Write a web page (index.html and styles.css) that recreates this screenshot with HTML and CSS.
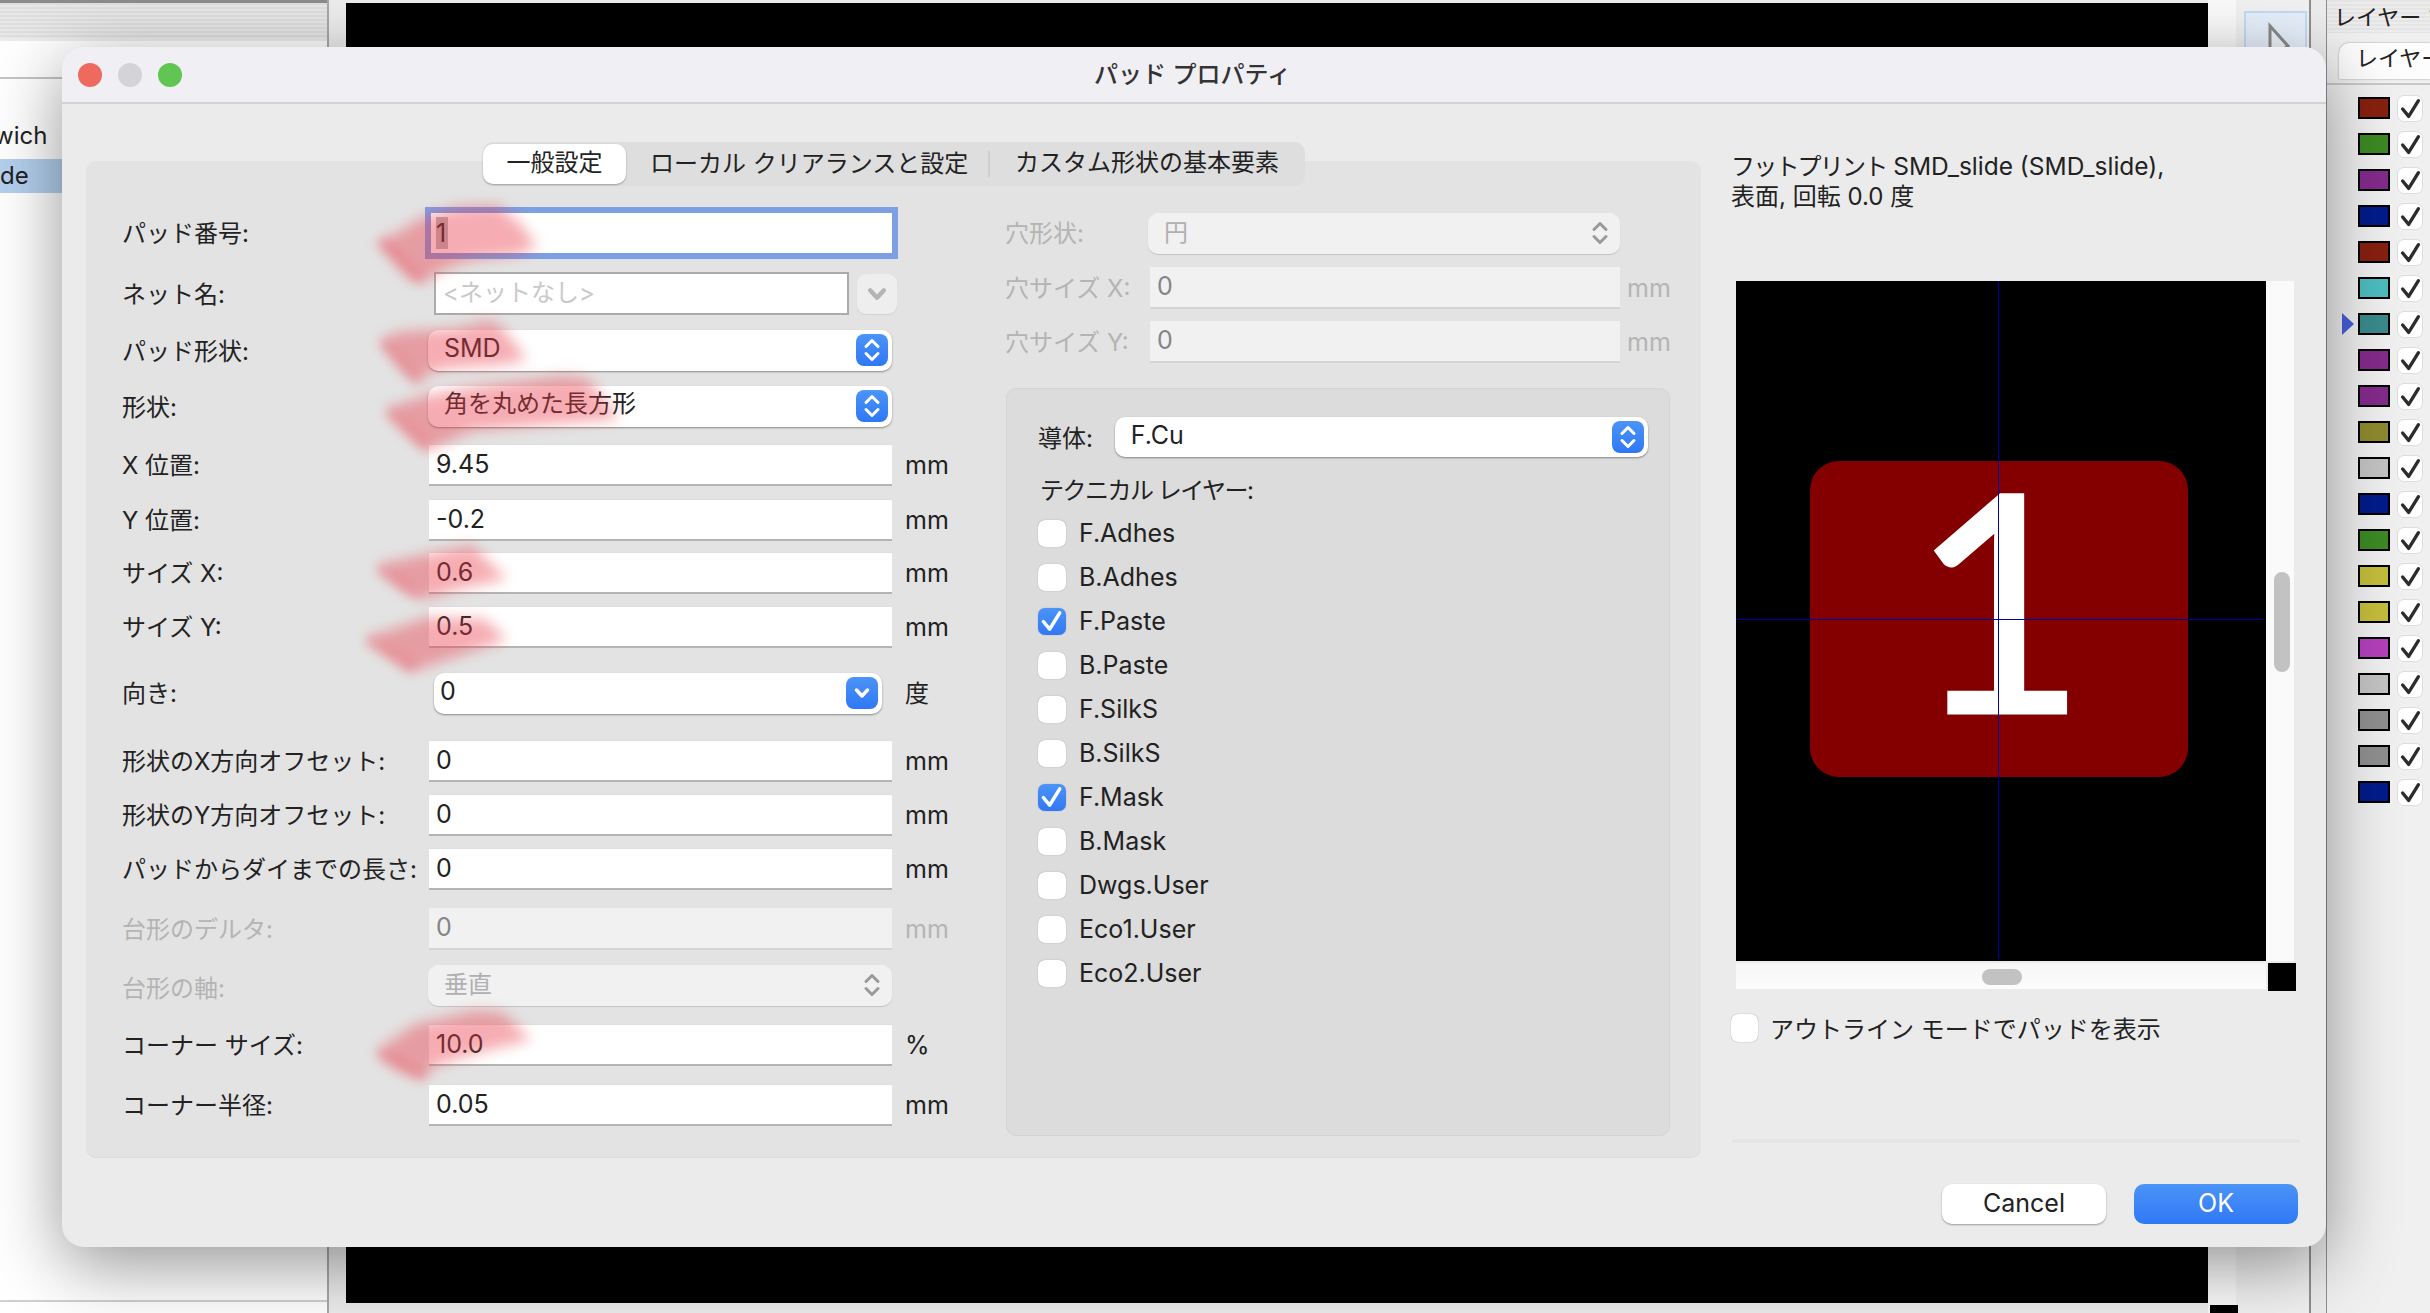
FILE: index.html
```html
<!DOCTYPE html>
<html lang="ja">

<head>
    <meta charset="UTF-8">
    <title>パッド プロパティ</title>
    <link rel="stylesheet" href="styles.css">
</head>

<body>
    <svg class="defs" width="0" height="0">
        <symbol id="stepper" viewBox="0 0 32 32">
            <path d="M10 12.500 16 6.500 22 12.500M10 19.500 16 25.500 22 19.500" fill="none" stroke="currentColor" stroke-width="3" stroke-linecap="round" stroke-linejoin="round"/>
        </symbol>
        <symbol id="down" viewBox="0 0 32 32">
            <path d="M10.500 13 16 19 21.500 13" fill="none" stroke="currentColor" stroke-width="3.500" stroke-linecap="round" stroke-linejoin="round"/>
        </symbol>
        <symbol id="tick" viewBox="0 0 28 28">
            <path d="M5 14 11.500 22 22 5" fill="none" stroke="currentColor" stroke-width="3.600" stroke-linecap="round" stroke-linejoin="round"/>
        </symbol>
    </svg>

    <div class="app">
        <div class="tree">
            <div class="strip"></div>
            <div class="tree-head"></div>
            <div class="tree-item first">wich</div>
            <div class="tree-item selected">de</div>
            <div class="tree-foot"></div>
        </div>
        <div class="gutter"></div>
        <div class="board"></div>
        <div class="board-scroll"><div class="board-corner"></div></div>
        <div class="tools">
            <div class="tool-btn">
                <svg width="40" height="50" viewBox="0 0 40 50"><path d="M18 13V46L36 33Z" fill="#eef3fa" stroke="#8a8a8a" stroke-width="3"/></svg>
            </div>
        </div>
        <div class="tools-edge"></div>
        <div class="layers">
            <div class="layers-title">レイヤー マネージャ</div>
            <div class="layers-tabs"><div class="layers-tab">レイヤー</div></div>
            <div class="layer-list">
                <div class="layer"><span class="swatch red"></span><span class="tick"><svg><use href="#tick"/></svg></span></div>
                <div class="layer"><span class="swatch green"></span><span class="tick"><svg><use href="#tick"/></svg></span></div>
                <div class="layer"><span class="swatch purple"></span><span class="tick"><svg><use href="#tick"/></svg></span></div>
                <div class="layer"><span class="swatch navy"></span><span class="tick"><svg><use href="#tick"/></svg></span></div>
                <div class="layer"><span class="swatch red"></span><span class="tick"><svg><use href="#tick"/></svg></span></div>
                <div class="layer"><span class="swatch cyan"></span><span class="tick"><svg><use href="#tick"/></svg></span></div>
                <div class="layer active"><span class="swatch teal"></span><span class="tick"><svg><use href="#tick"/></svg></span></div>
                <div class="layer"><span class="swatch purple"></span><span class="tick"><svg><use href="#tick"/></svg></span></div>
                <div class="layer"><span class="swatch purple"></span><span class="tick"><svg><use href="#tick"/></svg></span></div>
                <div class="layer"><span class="swatch olive"></span><span class="tick"><svg><use href="#tick"/></svg></span></div>
                <div class="layer"><span class="swatch silver"></span><span class="tick"><svg><use href="#tick"/></svg></span></div>
                <div class="layer"><span class="swatch navy"></span><span class="tick"><svg><use href="#tick"/></svg></span></div>
                <div class="layer"><span class="swatch green"></span><span class="tick"><svg><use href="#tick"/></svg></span></div>
                <div class="layer"><span class="swatch yellow"></span><span class="tick"><svg><use href="#tick"/></svg></span></div>
                <div class="layer"><span class="swatch yellow"></span><span class="tick"><svg><use href="#tick"/></svg></span></div>
                <div class="layer"><span class="swatch magenta"></span><span class="tick"><svg><use href="#tick"/></svg></span></div>
                <div class="layer"><span class="swatch silver"></span><span class="tick"><svg><use href="#tick"/></svg></span></div>
                <div class="layer"><span class="swatch gray"></span><span class="tick"><svg><use href="#tick"/></svg></span></div>
                <div class="layer"><span class="swatch gray"></span><span class="tick"><svg><use href="#tick"/></svg></span></div>
                <div class="layer"><span class="swatch navy"></span><span class="tick"><svg><use href="#tick"/></svg></span></div>
            </div>
        </div>
    </div>

    <div class="dialog">
        <div class="titlebar">
            <div class="lights">
                <span class="light close"></span>
                <span class="light idle"></span>
                <span class="light zoom"></span>
            </div>
            <div class="title">パッド プロパティ</div>
        </div>

        <div class="dialog-body">
            <div class="tabpanel">
                <div class="tabs">
                    <div class="tab on">一般設定</div>
                    <div class="tab second">ローカル クリアランスと設定</div>
                    <div class="tab third">カスタム形状の基本要素</div>
                </div>

                <div class="columns">
                    <div class="col-left">
                        <div class="row">
                            <label>パッド番号:</label>
                            <div class="field focus"><span class="selected-text">1</span></div>
                        </div>
                        <div class="row g18">
                            <label>ネット名:</label>
                            <div class="net">
                                <div class="net-input">&lt;ネットなし&gt;</div>
                                <div class="net-btn"><svg><use href="#down"/></svg></div>
                            </div>
                        </div>
                        <div class="row g15">
                            <label class="low">パッド形状:</label>
                            <div class="select latin">SMD<span class="step"><svg><use href="#stepper"/></svg></span></div>
                        </div>
                        <div class="row g14">
                            <label class="low">形状:</label>
                            <div class="select">角を丸めた長方形<span class="step"><svg><use href="#stepper"/></svg></span></div>
                        </div>
                        <div class="row g17">
                            <label>X 位置:</label>
                            <div class="field">9.45</div>
                            <span class="unit">mm</span>
                        </div>
                        <div class="row g13">
                            <label>Y 位置:</label>
                            <div class="field">-0.2</div>
                            <span class="unit">mm</span>
                        </div>
                        <div class="row g11">
                            <label>サイズ X:</label>
                            <div class="field">0.6</div>
                            <span class="unit">mm</span>
                        </div>
                        <div class="row g12">
                            <label>サイズ Y:</label>
                            <div class="field">0.5</div>
                            <span class="unit">mm</span>
                        </div>
                        <div class="row g24">
                            <label>向き:</label>
                            <div class="select angle latin">0<span class="step"><svg><use href="#down"/></svg></span></div>
                            <span class="unit cjk">度</span>
                        </div>
                        <div class="row g26">
                            <label>形状のX方向オフセット:</label>
                            <div class="field">0</div>
                            <span class="unit">mm</span>
                        </div>
                        <div class="row g12">
                            <label>形状のY方向オフセット:</label>
                            <div class="field">0</div>
                            <span class="unit">mm</span>
                        </div>
                        <div class="row g12">
                            <label>パッドからダイまでの長さ:</label>
                            <div class="field">0</div>
                            <span class="unit">mm</span>
                        </div>
                        <div class="row g18 off">
                            <label>台形のデルタ:</label>
                            <div class="field">0</div>
                            <span class="unit">mm</span>
                        </div>
                        <div class="row g14 off">
                            <label class="lower">台形の軸:</label>
                            <div class="select">垂直<span class="step"><svg><use href="#stepper"/></svg></span></div>
                        </div>
                        <div class="row g18">
                            <label>コーナー サイズ:</label>
                            <div class="field">10.0</div>
                            <span class="unit">%</span>
                        </div>
                        <div class="row g18">
                            <label>コーナー半径:</label>
                            <div class="field">0.05</div>
                            <span class="unit">mm</span>
                        </div>
                    </div>

                    <div class="col-right">
                        <div class="row drill off">
                            <label>穴形状:</label>
                            <div class="select">円<span class="step"><svg><use href="#stepper"/></svg></span></div>
                        </div>
                        <div class="row drill g13 off">
                            <label>穴サイズ X:</label>
                            <div class="field">0</div>
                            <span class="unit">mm</span>
                        </div>
                        <div class="row drill g12 off">
                            <label>穴サイズ Y:</label>
                            <div class="field">0</div>
                            <span class="unit">mm</span>
                        </div>

                        <div class="group">
                            <div class="copper">
                                <label>導体:</label>
                                <div class="select latin">F.Cu<span class="step"><svg><use href="#stepper"/></svg></span></div>
                            </div>
                            <div class="tech-title">テクニカル レイヤー:</div>
                            <div class="check-row"><span class="box"></span>F.Adhes</div>
                            <div class="check-row"><span class="box"></span>B.Adhes</div>
                            <div class="check-row"><span class="box on"><svg><use href="#tick"/></svg></span>F.Paste</div>
                            <div class="check-row"><span class="box"></span>B.Paste</div>
                            <div class="check-row"><span class="box"></span>F.SilkS</div>
                            <div class="check-row"><span class="box"></span>B.SilkS</div>
                            <div class="check-row"><span class="box on"><svg><use href="#tick"/></svg></span>F.Mask</div>
                            <div class="check-row"><span class="box"></span>B.Mask</div>
                            <div class="check-row"><span class="box"></span>Dwgs.User</div>
                            <div class="check-row"><span class="box"></span>Eco1.User</div>
                            <div class="check-row"><span class="box"></span>Eco2.User</div>
                        </div>
                    </div>
                </div>
            </div>

            <div class="side">
                <div class="info"><span class="kana">フットプリント</span> <span class="name">SMD_slide (SMD_slide),</span><br>表面, 回転 0.0 度</div>

                <div class="preview">
                    <div class="canvas">
                        <div class="pad">1</div>
                        <div class="cross-v"></div>
                        <div class="cross-h"></div>
                    </div>
                    <div class="vbar"><div class="vthumb"></div></div>
                    <div class="hbar"><div class="hthumb"></div></div>
                    <div class="corner"></div>
                </div>

                <div class="outline"><span class="box"></span>アウトライン モードでパッドを表示</div>
                <div class="separator"></div>
                <div class="buttons">
                    <div class="btn">Cancel</div>
                    <div class="btn primary">OK</div>
                </div>
            </div>
        </div>
    </div>

    <!-- highlighter strokes someone drew over the screenshot -->
    <svg class="marks" width="2430" height="1313" viewBox="0 0 2430 1313">
        <g class="mark-fill">
            <path d="M377 243 397 233 423 217 457 207 497 205 520 223 537 247 517 255 473 260 447 268 422 283 408 277Z"/>
            <path d="M380 340 398 332 428 330 457 328 490 320 503 328 527 360 500 365 453 368 430 372 420 383 403 370Z"/>
            <path d="M385 409 427 395 485 385 561 376 587 378 619 419 542 425 472 431 427 451 405 431Z"/>
            <path d="M376 565 427 554 472 545 507 579 459 589 427 599 402 589Z"/>
            <path d="M365 638 408 624 427 617 485 619 507 640 446 660 411 672Z"/>
            <path d="M376 1051 415 1024 478 1010 504 1013 531 1040 485 1051 434 1066 424 1080 395 1069Z"/>
        </g>
        <g class="mark-edge">
            <path d="M384 243 418 278"/>
            <path d="M386 345 415 378"/>
            <path d="M392 414 424 444"/>
            <path d="M383 571 416 594"/>
            <path d="M372 642 410 666"/>
            <path d="M383 1055 420 1074"/>
        </g>
    </svg>
</body>

</html>
```

FILE: styles.css
```css
* {
    box-sizing: border-box;
}

body {
    margin: 0;
    width: 2430px;
    height: 1313px;
    overflow: hidden;
    position: relative;
    background: #ececec;
    font-family: Inter, "Noto Sans CJK JP", sans-serif;
    font-size: 24px;
    color: #222;
}

.defs {
    position: absolute;
}

/* window behind the dialog */
.app {
    display: flex;
    height: 1313px;
}

.tree {
    width: 329px;
    background: #fff;
    border-right: 2px solid #a8a8a8;
    display: flex;
    flex-direction: column;
    flex: none;
}

.strip {
    height: 38px;
    border-top: 3px solid #8c8c8c;
    background: repeating-linear-gradient(#dedede 0 2px, #e8e8e8 2px 4px);
}

.tree-head {
    height: 41px;
    border-top: 3px solid #ececec;
    border-bottom: 2px solid #c4c4c4;
}

.tree-item {
    height: 34px;
    line-height: 34px;
    white-space: nowrap;
}

.tree-item.first {
    margin-top: 40px;
    text-indent: -6px;
}

.tree-item.selected {
    margin-top: 6px;
    background: #b4d0ee;
}

.tree-foot {
    margin-top: auto;
    height: 13px;
    border-top: 2px solid #d0d0d0;
}

.gutter {
    width: 17px;
    flex: none;
    background: #ededed;
}

.board {
    width: 1862px;
    height: 1300px;
    margin-top: 3px;
    flex: none;
    background-color: #000;
    background-image: radial-gradient(circle 1px at 45px 45px, #aaa 50%, transparent 51%);
    background-size: 90px 90px;
    background-position: -5px -16px;
}

.board-scroll {
    width: 28px;
    flex: none;
    background: #fafafa;
    position: relative;
}

.board-corner {
    position: absolute;
    left: 2px;
    bottom: 0;
    width: 28px;
    height: 8px;
    background: #000;
}

.tools {
    width: 75px;
    flex: none;
    padding: 11px 0 0 8px;
    background: #f1f1f1;
    border-right: 2px solid #8f8f8f;
}

.tool-btn {
    width: 63px;
    height: 60px;
    background: #e6f0fb;
    border: 2px solid #c3dbf7;
    padding-left: 6px;
}

.tools-edge {
    width: 16px;
    flex: none;
    background: #ececec;
    border-right: 1px solid #8f8f8f;
}

.layers {
    flex: 1;
    min-width: 0;
    overflow: hidden;
    background: #f0f0f0;
}

.layers-title {
    height: 33px;
    padding-left: 7px;
    line-height: 34px;
    font-size: 22px;
    white-space: nowrap;
    background: repeating-linear-gradient(#e4e4e4 0 2px, #ececec 2px 4px);
}

.layers-tabs {
    height: 52px;
    padding: 10px 0 0 12px;
    border-bottom: 2px solid #c8c8c8;
}

.layers-tab {
    height: 36px;
    padding-left: 17px;
    line-height: 30px;
    font-size: 22px;
    white-space: nowrap;
    background: #fdfdfd;
    border-radius: 10px 0 0 0;
    box-shadow: 0 0 2px rgba(0, 0, 0, .4);
}

.layer-list {
    padding: 5px 0 0 31px;
}

.layer {
    height: 36px;
    display: flex;
    align-items: center;
    position: relative;
}

.layer.active::before {
    content: "";
    position: absolute;
    left: -16px;
    top: 7px;
    border-left: 12px solid #4a5ddc;
    border-top: 11px solid transparent;
    border-bottom: 11px solid transparent;
}

.swatch {
    width: 32px;
    height: 22px;
    border: 2px solid #000;
    margin-right: 7px;
}

.red { background: #87200f; }
.green { background: #3b8a24; }
.purple { background: #842a8c; }
.navy { background: #001c8a; }
.cyan { background: #4dbcbf; }
.teal { background: #3a8a8c; }
.olive { background: #8d8a2d; }
.silver { background: #c3c3c3; }
.yellow { background: #c4bd3b; }
.magenta { background: #b340bb; }
.gray { background: #8f8f8f; }

.tick {
    width: 26px;
    height: 27px;
    background: #fff;
    border: 1px solid #ddd;
    border-radius: 7px;
    color: #2c2c2c;
}

.tick svg {
    display: block;
    width: 26px;
    height: 26px;
}

/* dialog */
.dialog {
    position: absolute;
    left: 62px;
    top: 47px;
    width: 2264px;
    height: 1200px;
    background: #ebebeb;
    border-radius: 22px;
    box-shadow: 0 18px 70px rgba(0, 0, 0, .42);
    overflow: hidden;
}

.titlebar {
    height: 57px;
    background: #efeff4;
    border-bottom: 2px solid #d2d2d2;
    display: flex;
    align-items: center;
    justify-content: center;
    position: relative;
}

.lights {
    position: absolute;
    left: 16px;
    top: 16px;
    display: flex;
    gap: 16px;
}

.light {
    width: 24px;
    height: 24px;
    border-radius: 50%;
}

.close { background: #ee6a5f; }
.idle { background: #d4d4d8; }
.zoom { background: #61c554; }

.title {
    color: #333;
    font-weight: 500;
    margin: -5px 3px 0 0;
}

.dialog-body {
    display: flex;
    gap: 30px;
    padding-left: 24px;
}

.tabpanel {
    width: 1615px;
    height: 997px;
    margin-top: 57px;
    background: #e3e3e3;
    border-radius: 10px;
    border-bottom: 1px solid #dadada;
}

.tabs {
    display: flex;
    width: 822px;
    height: 44px;
    margin: -19px 0 0 397px;
    background: #dedede;
    border-radius: 10px;
    align-items: center;
}

.tab {
    height: 44px;
    line-height: 42px;
    white-space: nowrap;
}

.tab.on {
    width: 143px;
    height: 40px;
    line-height: 37px;
    text-align: center;
    background: #fff;
    border-radius: 10px;
    box-shadow: 0 1px 2px rgba(0, 0, 0, .3);
}

.tab.second {
    margin-left: 24px;
    width: 340px;
    border-right: 2px solid #cfcfcf;
    height: 26px;
    line-height: 25px;
}

.tab.third {
    margin-left: 25px;
    line-height: 41px;
}

.columns {
    display: flex;
    padding: 26px 0 0 36px;
}

.col-left {
    width: 883px;
    flex: none;
}

.col-right {
    width: 665px;
    flex: none;
}

.row {
    display: grid;
    grid-template-columns: 307px 463px auto;
    align-items: center;
    height: 42px;
}

.row label {
    padding-bottom: 3px;
}

.row label.low {
    padding-bottom: 1px;
}

.row label.lower {
    padding-bottom: 0;
    margin-top: 2px;
}

.g11 { margin-top: 11px; }
.g12 { margin-top: 12px; }
.g13 { margin-top: 13px; }
.g14 { margin-top: 14px; }
.g15 { margin-top: 15px; }
.g17 { margin-top: 17px; }
.g18 { margin-top: 18px; }
.g24 { margin-top: 24px; }
.g26 { margin-top: 26px; }

.field {
    height: 42px;
    line-height: 39px;
    padding-left: 7px;
    font-size: 25px;
    background: #fff;
    border-top: 1px solid #dedede;
    border-bottom: 2px solid #b4b4b4;
}

.field.focus {
    width: 461px;
    height: 40px;
    margin-left: 2px;
    padding-left: 5px;
    border: 0;
    line-height: 40px;
    box-shadow: 0 0 0 6px #7d9fe3;
}

.selected-text {
    display: inline-block;
    width: 12px;
    height: 32px;
    line-height: 32px;
    background: #b9b9b9;
}

.unit {
    margin-left: 13px;
    font-size: 25px;
}

.unit.cjk {
    font-size: 24px;
    padding-bottom: 3px;
}

.net {
    display: flex;
    width: 468px;
    margin-left: 5px;
    gap: 8px;
    align-items: center;
}

.net-input {
    width: 415px;
    height: 43px;
    line-height: 38px;
    padding-left: 7px;
    color: #c9c9c9;
    background: #fff;
    border: 2px solid #ababab;
}

.net-btn {
    width: 40px;
    height: 40px;
    background: #eee;
    border-radius: 9px;
    color: #b4b4b4;
    box-shadow: 0 1px 1px rgba(0, 0, 0, .08);
}

.net-btn svg {
    display: block;
    width: 40px;
    height: 40px;
}

.select {
    height: 41px;
    line-height: 36px;
    width: 464px;
    margin-left: -1px;
    padding: 0 4px 0 16px;
    background: #fff;
    border-radius: 10px;
    box-shadow: 0 1px 2px rgba(0, 0, 0, .4);
    display: flex;
    justify-content: space-between;
    align-items: flex-start;
}

.select.latin {
    font-size: 25px;
}

.select.angle {
    width: 448px;
    margin-left: 5px;
    padding-left: 6px;
}

.step {
    width: 32px;
    height: 32px;
    align-self: center;
    border-radius: 8px;
    color: #fff;
    background: linear-gradient(#4b94f8, #2f78f5);
}

.step svg {
    display: block;
    width: 32px;
    height: 32px;
}

.off label,
.off .unit {
    color: #b4b4b4;
}

.off .field,
.off .select {
    background: #f1f1f1;
    color: #858585;
}

.off .field {
    border-top: 0;
    border-bottom-color: #d4d4d4;
}

.off .select {
    color: #b0b0b0;
    line-height: 39px;
    box-shadow: 0 1px 1px rgba(0, 0, 0, .14);
}

.off .step {
    background: none;
    color: #9a9a9a;
}

.drill {
    grid-template-columns: 145px 470px auto;
}

.drill .unit {
    margin-left: 7px;
}

.drill .select {
    width: 472px;
    margin-left: -2px;
}

.group {
    width: 664px;
    height: 748px;
    margin: 25px 0 0 1px;
    padding: 28px 21px 0 31px;
    background: #dcdcdc;
    border: 1px solid #d4d4d4;
    border-radius: 10px;
}

.copper {
    display: flex;
    align-items: center;
    height: 40px;
}

.copper label {
    width: 77px;
    padding-bottom: 2px;
}

.copper .select {
    width: 535px;
    height: 40px;
    margin-left: 0;
}

.tech-title {
    margin: 19px 0 5px;
    height: 30px;
    line-height: 30px;
    padding-left: 2px;
    letter-spacing: -1.500px;
}

.check-row {
    display: flex;
    align-items: center;
    height: 44px;
    font-size: 25px;
}

.box {
    width: 28px;
    height: 27px;
    margin-right: 13px;
    background: #fff;
    border-radius: 7px;
    box-shadow: 0 0 1px rgba(0, 0, 0, .45);
    flex: none;
}

.box.on {
    color: #fff;
    background: linear-gradient(#4b94f8, #2f78f5);
}

.box svg {
    display: block;
    width: 28px;
    height: 27px;
}

/* right side of the dialog */
.side {
    width: 569px;
    padding-top: 47px;
}

.info {
    line-height: 30px;
    height: 60px;
    white-space: nowrap;
}

.kana {
    letter-spacing: -1.800px;
}

.name {
    font-size: 24.500px;
}

.preview {
    display: grid;
    grid-template-columns: 530px 30px;
    grid-template-rows: 682px 28px;
    margin: 70px 0 0 5px;
}

.canvas {
    height: 680px;
    background: #000;
    position: relative;
    overflow: hidden;
}

.pad {
    position: absolute;
    left: 74px;
    top: 180px;
    width: 378px;
    height: 316px;
    border-radius: 29px;
    background: #840000;
    color: #fff;
    font-family: Lato, sans-serif;
    font-weight: 400;
    font-size: 304px;
    line-height: 270px;
    text-align: center;
    -webkit-text-stroke: 3px #fff;
}

.cross-v {
    position: absolute;
    left: 262px;
    top: 0;
    width: 1px;
    height: 678px;
    background: #0000a8;
}

.cross-h {
    position: absolute;
    left: 0;
    top: 338px;
    width: 528px;
    height: 1px;
    background: #0000a8;
}

.vbar {
    width: 28px;
    height: 680px;
    padding: 291px 0 0 8px;
    background: #fafafa;
}

.vthumb {
    width: 16px;
    height: 100px;
    border-radius: 8px;
    background: #c2c2c2;
}

.hbar {
    width: 530px;
    height: 26px;
    padding: 6px 0 0 246px;
    background: linear-gradient(#f6f6f6, #fcfcfc);
}

.hthumb {
    width: 40px;
    height: 16px;
    border-radius: 8px;
    background: #c2c2c2;
}

.corner {
    width: 28px;
    height: 28px;
    margin-left: 2px;
    background: #000;
}

.outline {
    display: flex;
    align-items: center;
    height: 28px;
    margin-top: 23px;
    padding-bottom: 1px;
    white-space: nowrap;
}

.outline .box {
    width: 27px;
    height: 28px;
    margin-right: 12px;
}

.separator {
    height: 4px;
    margin: 97px 0 0 1px;
    background: #e5e5e5;
}

.buttons {
    display: flex;
    justify-content: flex-end;
    gap: 28px;
    margin: 41px 2px 0 0;
}

.btn {
    width: 164px;
    height: 40px;
    line-height: 38px;
    font-size: 25px;
    text-align: center;
    background: #fff;
    border-radius: 10px;
    box-shadow: 0 1px 2px rgba(0, 0, 0, .35);
}

.btn.primary {
    color: #fff;
    background: linear-gradient(#4b94f8, #2f78f5);
    box-shadow: none;
}

.marks {
    position: absolute;
    left: 0;
    top: 0;
    pointer-events: none;
}

.mark-fill {
    fill: #e93c4a;
    opacity: .42;
    filter: blur(7px);
}

.mark-edge {
    fill: none;
    stroke: #e8525e;
    stroke-width: 12px;
    stroke-linecap: round;
    opacity: .25;
    filter: blur(5px);
}
```
